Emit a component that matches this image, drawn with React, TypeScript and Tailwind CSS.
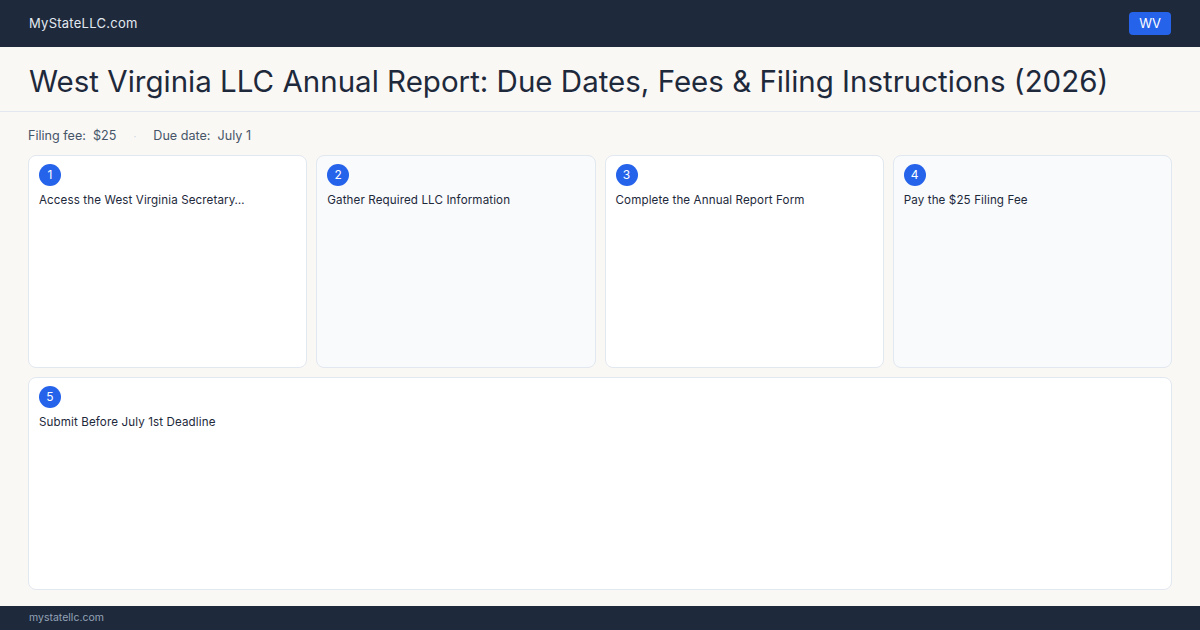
import React from "react";

const steps = [
  "Access the West Virginia Secretary…",
  "Gather Required LLC Information",
  "Complete the Annual Report Form",
  "Pay the $25 Filing Fee",
];

const StepCard = ({ n, title, tinted, wide }: { n: number; title: string; tinted?: boolean; wide?: boolean }) => (
  <div
    className={`${tinted ? "bg-[#f8fafc]" : "bg-white"} ${wide ? "col-span-4" : ""} border border-[#e2e8f0] rounded-lg px-[10px] pt-[8px] min-w-0`}
  >
    <div className="w-[22px] h-[22px] rounded-full bg-[#2563eb] text-white text-[12px] flex items-center justify-center">
      {n}
    </div>
    <p className="mt-[6px] text-[11.6px] text-[#1e293b] whitespace-nowrap tracking-[0.01em]">{title}</p>
  </div>
);

export default function App() {
  return (
    <div
      className="w-[1200px] h-[630px] flex flex-col bg-[#f9f8f5] overflow-hidden"
      style={{ fontFamily: "Inter, 'Noto Sans', sans-serif" }}
    >
      <header className="h-[47px] bg-[#1e293b] flex items-center justify-between px-[29px] shrink-0">
        <span className="text-[13px] text-[#e2e8f0] tracking-[0.02em]">MyStateLLC.com</span>
        <span className="bg-[#2563eb] text-white text-[13px] rounded px-[10px] h-[23px] flex items-center">WV</span>
      </header>

      <div className="h-[65px] border-b border-[#e2e8f0] flex items-center px-[29px] pt-[5px] shrink-0">
        <h1 className="text-[29.5px] text-[#1e293b] whitespace-nowrap">
          West Virginia LLC Annual Report: Due Dates, Fees &amp; Filing Instructions (2026)
        </h1>
      </div>

      <main className="flex-1 flex flex-col px-[28px] pt-[15px] pb-[16px] min-h-0">
        <div className="flex items-center text-[12.6px] text-[#475569] h-[18px]">
          <span>Filing fee:&nbsp; $25</span>
          <span className="mx-[17px] text-[#cbd5e1] text-[10px]">·</span>
          <span>Due date:&nbsp; July 1</span>
        </div>
        <div className="mt-[10px] flex-1 grid grid-cols-4 grid-rows-2 gap-[9px] min-h-0">
          {steps.map((s, i) => (
            <StepCard key={i} n={i + 1} title={s} tinted={i % 2 === 1} />
          ))}
          <StepCard n={5} title="Submit Before July 1st Deadline" wide />
        </div>
      </main>

      <footer className="h-[24px] bg-[#1e293b] flex items-center px-[29px] shrink-0">
        <span className="text-[10.5px] text-[#94a3b8]">mystatellc.com</span>
      </footer>
    </div>
  );
}
